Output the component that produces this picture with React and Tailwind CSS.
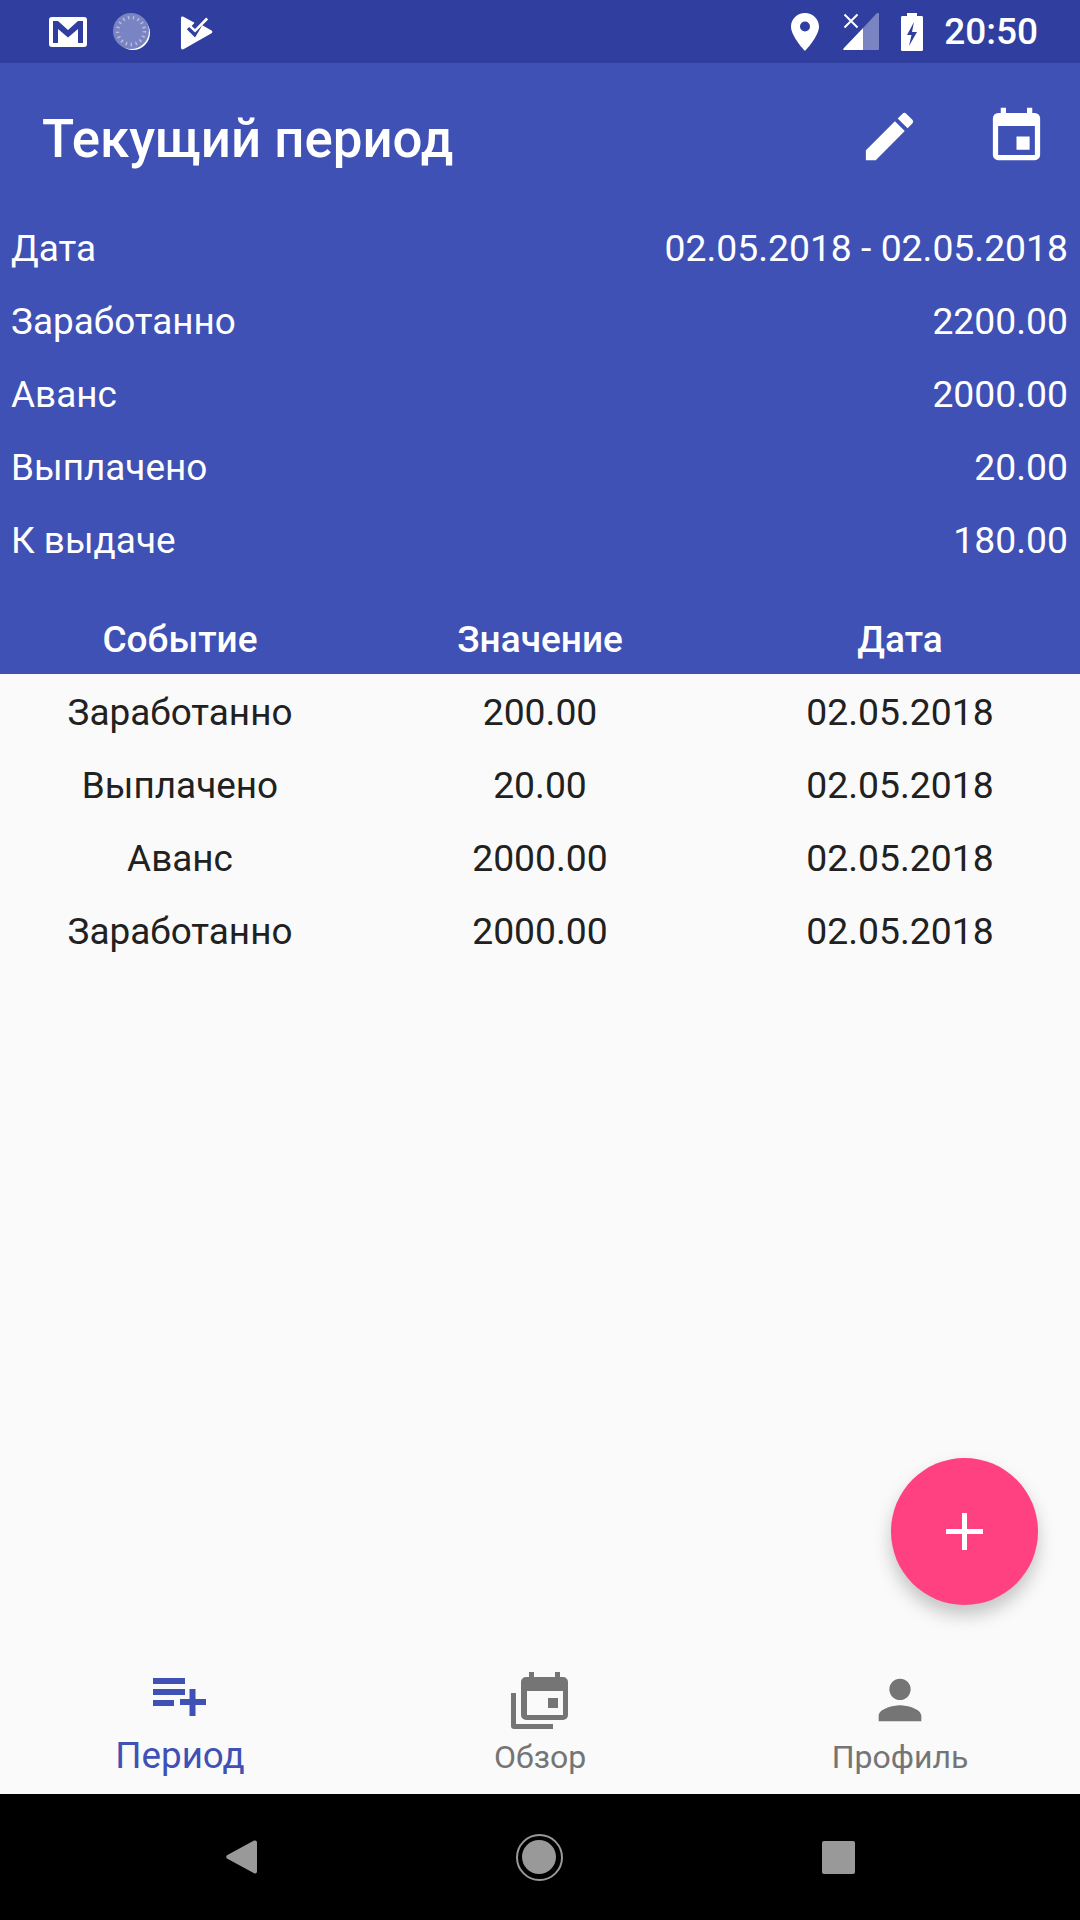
const ROBOTO = "font-['Roboto',sans-serif]";

const SUMMARY = [
  ["Дата", "02.05.2018 - 02.05.2018"],
  ["Заработанно", "2200.00"],
  ["Аванс", "2000.00"],
  ["Выплачено", "20.00"],
  ["К выдаче", "180.00"],
];

const EVENTS = [
  ["Заработанно", "200.00", "02.05.2018"],
  ["Выплачено", "20.00", "02.05.2018"],
  ["Аванс", "2000.00", "02.05.2018"],
  ["Заработанно", "2000.00", "02.05.2018"],
];

function StatusBar() {
  return (
    <div className="h-[63px] bg-[#303f9f] flex items-center pl-[49px] pr-[42px] text-white">
      <svg width="38" height="30" viewBox="0 0 38 30" className="mr-[26px]">
        <rect x="0" y="0" width="38" height="30" rx="3" fill="#fff" />
        <path d="M4 26V4h5l10 9 10-9h5v22h-5V12l-10 8.500L9 12v14z" fill="#303f9f" />
      </svg>
      <svg width="38" height="38" viewBox="0 0 38 38" className="mr-[29px]">
        <circle cx="20" cy="20" r="17" fill="#fff" />
        <circle cx="18" cy="18" r="18" fill="#7a84c2" />
        <circle cx="18" cy="18" r="13.500" fill="none" stroke="#b4bbdf" strokeWidth="3.500" strokeDasharray="1.500 3.500" />
      </svg>
      <svg width="33" height="36" viewBox="0 0 34 36" className="mt-[2px]">
        <path d="M1 2.500c0-1.500 1.300-2 2.500-1.300L15 7.500l-3 3.200 3.500 3.300L27 2l2 2-13.500 13.500-6-5.800-2.500 2.500 8.500 8.500L23 10l9.500 5.500c1.200.8 1.200 2 0 2.700L4 34.500C2.500 35.500 1 34.800 1 33z" fill="#fff" />
      </svg>
      <div className="flex-1" />
      <svg width="28" height="38" viewBox="0 0 28 38" className="mr-[24px]">
        <path fillRule="evenodd" d="M14 0C6.300 0 0 6 0 13.500 0 23.500 14 38 14 38s14-14.500 14-24.500C28 6 21.700 0 14 0zm0 18.500a5 5 0 1 1 0-10 5 5 0 0 1 0 10z" fill="#fff" />
      </svg>
      <svg width="36" height="37" viewBox="0 0 36 37" className="mr-[22px]">
        <path d="M1.500 1.500l13 13M14.500 1.500l-13 13" stroke="#fff" strokeWidth="2" fill="none" />
        <path d="M35 0a1 1 0 0 1 1 1v35a1 1 0 0 1-1 1H20V15L34 0z" fill="#7a84c2" />
        <path d="M20 15v22H1c-1 0-1-1-.5-1.500z" fill="#fff" />
      </svg>
      <svg width="22" height="38" viewBox="0 0 22 38" className="mr-[21px]">
        <path fillRule="evenodd" d="M6 0h10v3h4.500c1 0 1.500.6 1.500 1.500V36.500c0 1-.6 1.500-1.500 1.500h-19C.6 38 0 37.500 0 36.500V4.500C0 3.600.6 3 1.500 3H6zM13 9l-7 13h4.500L8 33l8-14h-5z" fill="#fff" />
      </svg>
      <span className={`${ROBOTO} text-[37px] font-medium leading-none`}>20:50</span>
    </div>
  );
}

function Header() {
  return (
    <div className="bg-[#3f51b5] text-white">
      <div className="h-[149px] pb-[3px] flex items-center pl-[42px] pr-[32px]">
        <span className={`${ROBOTO} text-[52.8px] font-medium flex-1 pt-[7px]`}>Текущий период</span>
        <svg width="63" height="63" viewBox="0 0 24 24" className="mr-[64px]" fill="#fff">
          <path d="M3 17.250V21h3.750L17.810 9.940l-3.750-3.750L3 17.250zM20.710 7.040a1 1 0 0 0 0-1.410l-2.340-2.340a1 1 0 0 0-1.410 0l-1.830 1.830 3.750 3.750 1.830-1.830z" />
        </svg>
        <svg width="63" height="63" viewBox="0 0 24 24" fill="#fff">
          <path d="M17 12h-5v5h5v-5zM16 1v2H8V1H6v2H5a2 2 0 0 0-2 2v14a2 2 0 0 0 2 2h14a2 2 0 0 0 2-2V5a2 2 0 0 0-2-2h-1V1h-2zm3 18H5V8h14v11z" />
        </svg>
      </div>
      <div className="flex flex-col pl-[11px] pr-[12px]">
        {SUMMARY.map(([label, value]) => (
          <div key={label} className={`${ROBOTO} h-[73px] flex items-center justify-between text-[37.3px]`}>
            <span className="text-[36.9px]">{label}</span>
            <span>{value}</span>
          </div>
        ))}
      </div>
      <div className={`${ROBOTO} grid grid-cols-3 h-[97px] pt-[28px] items-center text-center text-[37px] font-medium`}>
        <span>Событие</span>
        <span>Значение</span>
        <span>Дата</span>
      </div>
    </div>
  );
}

function NavItem({ label, active, icon }) {
  return (
    <div className="flex flex-col items-center">
      <div className="h-[64px] flex items-center">{icon}</div>
      <span className={`${ROBOTO} ${active ? "mt-[2px] text-[36.75px] text-[#3f51b5]" : "mt-[3px] text-[32px] text-[#757575]"} leading-[44px]`}>
        {label}
      </span>
    </div>
  );
}

function BottomNav() {
  return (
    <div className="grid grid-cols-3 h-[152px] pt-[26px] bg-[#fafafa]">
      <NavItem
        label="Период"
        active
        icon={
          <svg width="53" height="38" viewBox="0 0 53 38" fill="#3f51b5" className="mb-[6px] mr-[1px]">
            <path d="M0 0h32v6H0zM0 11h32v6H0zM0 22h21v6H0zM27 21h9.500V11h6v10H53v6H42.500v11h-6V27H27z" />
          </svg>
        }
      />
      <NavItem
        label="Обзор"
        icon={
          <svg width="57" height="57" viewBox="0 0 57 57" fill="#757575" className="mr-[1px]">
            <path d="M0 21h5v31h37v5H3a3 3 0 0 1-3-3z" />
            <path fillRule="evenodd" d="M18 0h5v5h21V0h5v5h3a5 5 0 0 1 5 5v33a5 5 0 0 1-5 5H15a5 5 0 0 1-5-5V10a5 5 0 0 1 5-5h3zM16 19v24h36V19zM37 26h10v10H37z" />
          </svg>
        }
      />
      <NavItem
        label="Профиль"
        icon={
          <svg width="64" height="64" viewBox="0 0 24 24" fill="#757575">
            <path d="M12 12a4 4 0 1 0 0-8 4 4 0 0 0 0 8zm0 2c-2.670 0-8 1.340-8 4v2h16v-2c0-2.660-5.330-4-8-4z" />
          </svg>
        }
      />
    </div>
  );
}

function SystemNav() {
  return (
    <div className="h-[126px] bg-black flex items-center justify-center gap-[259px]">
      <svg width="31" height="36" viewBox="0 0 32 36">
        <path d="M30 1a2 2 0 0 1 2 2v30a2 2 0 0 1-3 1.700L1 19.500a2 2 0 0 1 0-3.200L29 1z" fill="#999" />
      </svg>
      <div className="w-[47px] h-[47px] rounded-full border-[2.5px] border-[#999] flex items-center justify-center">
        <div className="w-[34px] h-[34px] rounded-full bg-[#999]" />
      </div>
      <div className="w-[33px] h-[33px] rounded-[2px] bg-[#999]" />
    </div>
  );
}

export default function App() {
  return (
    <div className="relative w-[1080px] h-[1920px] overflow-hidden flex flex-col bg-[#fafafa]">
      <StatusBar />
      <Header />
      <div className="flex-1 flex flex-col pt-[2px]">
        {EVENTS.map((row, i) => (
          <div key={i} className={`${ROBOTO} grid grid-cols-3 h-[73px] items-center text-center text-[37.3px] text-[#212121]`}>
            {row.map((cell, j) => (
              <span key={j} className={j === 0 ? "text-[36.9px]" : ""}>{cell}</span>
            ))}
          </div>
        ))}
      </div>
      <BottomNav />
      <SystemNav />

      {/* FAB */}
      <div className="absolute left-[891px] top-[1458px] w-[147px] h-[147px] rounded-full bg-[#ff4081] flex items-center justify-center shadow-[0_10px_18px_rgba(0,0,0,0.22)]">
        <svg width="37" height="37" viewBox="0 0 37 37" fill="#fff">
          <path d="M16 0h5v16h16v5H21v16h-5V21H0v-5h16z" />
        </svg>
      </div>
    </div>
  );
}
